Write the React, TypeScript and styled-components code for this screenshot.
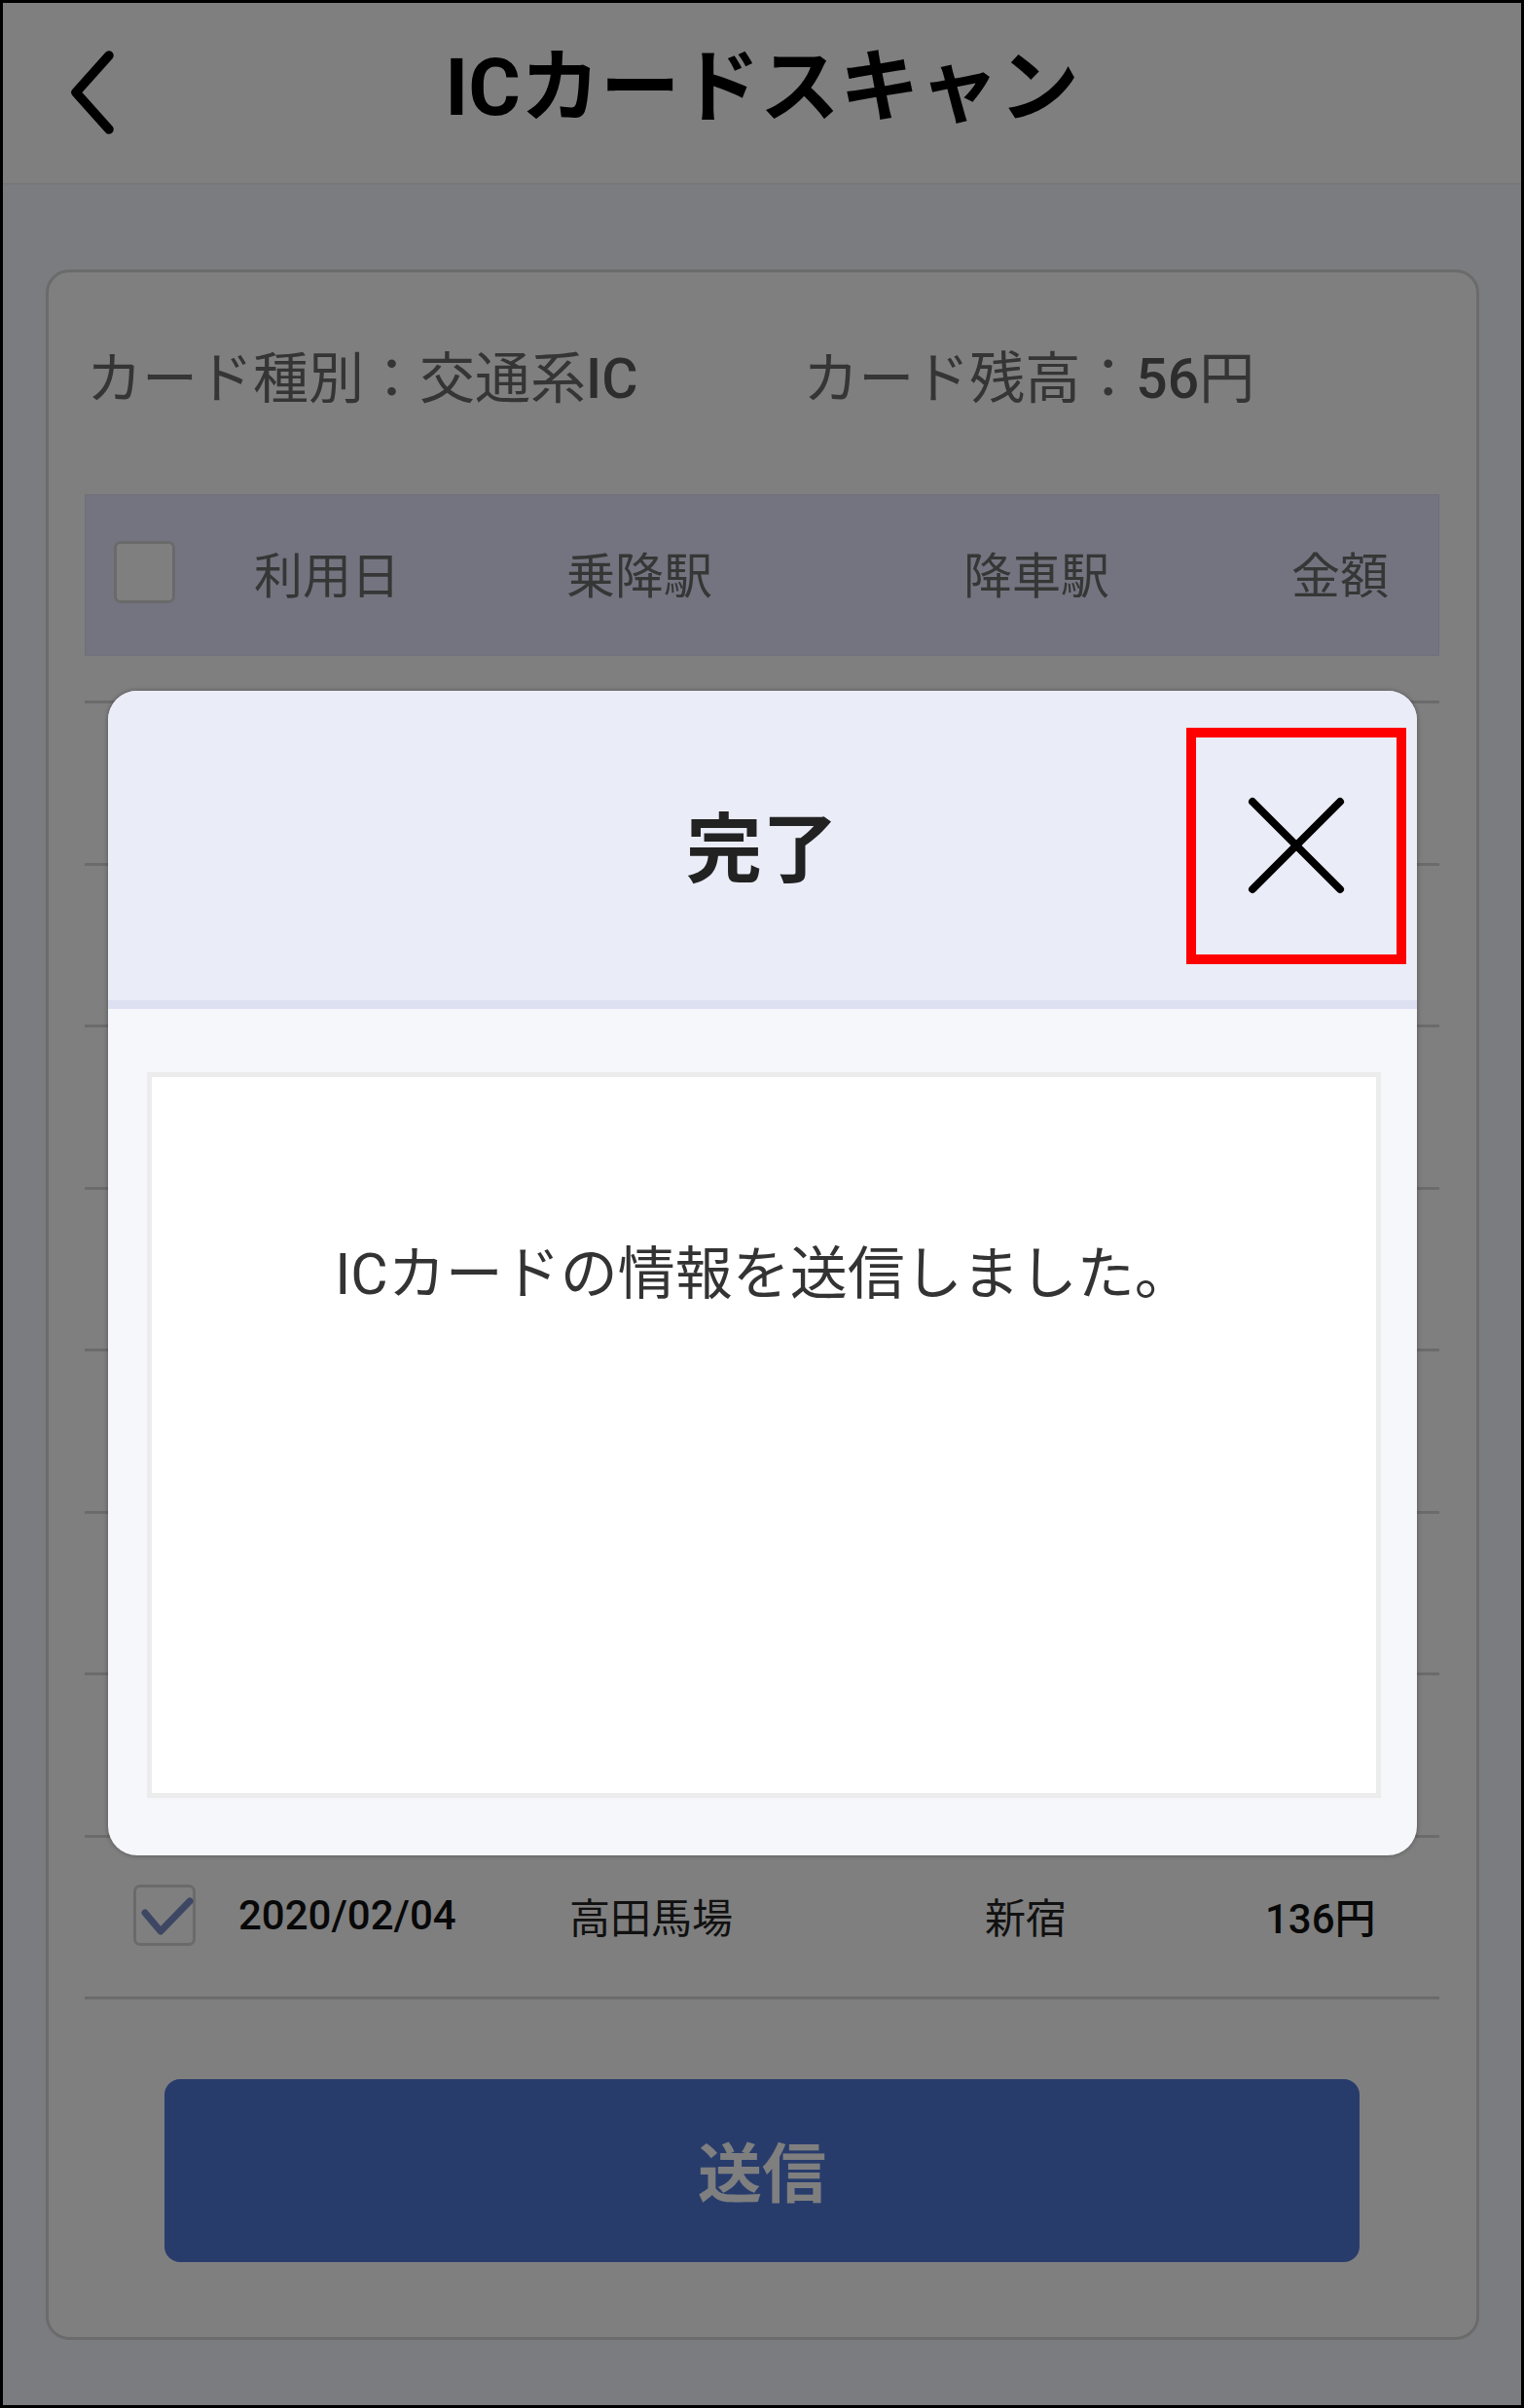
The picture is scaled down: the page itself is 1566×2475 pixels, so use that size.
import React from "react";
import styled, { createGlobalStyle } from "styled-components";

const GlobalStyle = createGlobalStyle`
  * { box-sizing: border-box; }
  html, body { margin: 0; padding: 0; background: #000; }
  body { font-family: Roboto, "Noto Sans CJK JP", sans-serif; }
`;

const FONT = `Roboto, "Noto Sans CJK JP", sans-serif`;

const Frame = styled.div`
  position: relative;
  width: 1566px;
  height: 2475px;
  border: 3px solid #000;
  background: #f6f8ff;
  overflow: hidden;
  display: flex;
  flex-direction: column;
  font-family: ${FONT};
`;

const TopBar = styled.header`
  height: 187px;
  flex-shrink: 0;
  background: #fff;
  border-bottom: 2px solid #eeeef6;
  display: grid;
  grid-template-columns: 1fr auto 1fr;
  align-items: center;
`;

const BackButton = styled.button`
  justify-self: start;
  margin-left: 64px;
  padding: 0;
  border: 0;
  background: none;
  width: 54px;
  height: 96px;
  display: flex;
`;

const PageTitle = styled.h1`
  margin: 0 0 10px;
  font-size: 82px;
  font-weight: 700;
  color: #000;
  line-height: 1.2;
  white-space: nowrap;
`;

const Main = styled.main`
  padding: 87px 43px 0 44px;
`;

const Card = styled.section`
  background: #fff;
  border: 3px solid #d6d6d6;
  border-radius: 24px;
  padding: 76px 38px 77px 37px;
`;

const InfoRow = styled.div`
  display: flex;
  gap: 170px;
  padding-left: 2px;
  font-size: 57px;
  line-height: 68px;
  color: #6a6a6a;
`;

const InfoItem = styled.span`
  white-space: nowrap;
`;

const Latin = styled.span`
  font-weight: 500;
  color: #5a5a5a;
`;

const TableGrid = styled.div<{ $cols: string; $pad: number }>`
  display: grid;
  grid-template-columns: ${(p) => p.$cols};
  align-items: center;
  padding-left: ${(p) => p.$pad}px;
`;

const TableHead = styled(TableGrid)`
  margin-top: 84px;
  height: 166px;
  padding-bottom: 6px;
  background: #e6e8ff;
  border: 1px solid #dcdef0;
  font-size: 50px;
  color: #6c6c6c;
`;

const List = styled.div`
  margin-top: 46px;
  border-top: 3px solid #d6d6d6;
`;

const Row = styled(TableGrid)`
  height: 166.5px;
  padding-bottom: 3px;
  border-bottom: 3px solid #d6d6d6;
  font-size: 42px;
  color: #222;
`;

const Cell = styled.span<{ $strong?: boolean }>`
  white-space: nowrap;
  font-weight: ${(p) => (p.$strong ? 500 : 400)};
  color: ${(p) => (p.$strong ? "#111" : "inherit")};
`;

const Check = styled.span<{ $w: number; $h: number }>`
  position: relative;
  display: block;
  width: ${(p) => p.$w}px;
  height: ${(p) => p.$h}px;
  border: 3px solid #d4d4d4;
  border-radius: 7px;
  background: #fff;
`;

const CheckMark = styled.svg`
  position: absolute;
  left: 3px;
  top: 9px;
`;

const SendButton = styled.button`
  display: flex;
  align-items: center;
  justify-content: center;
  margin: 82px auto 0;
  width: 1228px;
  height: 188px;
  padding-bottom: 6px;
  border: 0;
  border-radius: 16px;
  background: #5078d8;
  color: #fff;
  font-family: ${FONT};
  font-size: 66px;
  font-weight: 700;
`;

const Overlay = styled.div`
  position: absolute;
  inset: 0;
  background: rgba(0, 0, 0, 0.5);
  display: flex;
  justify-content: center;
  align-items: flex-start;
  padding-top: 707px;
`;

const Modal = styled.div`
  width: 1345px;
  background: #f6f7fb;
  border-radius: 30px;
  overflow: hidden;
  box-shadow: 0 0 5px rgba(0, 0, 0, 0.35);
`;

const ModalHeader = styled.div`
  height: 327px;
  background: #eaecf7;
  border-bottom: 9px solid #dde0f0;
  display: grid;
  grid-template-columns: 1fr auto 1fr;
  align-items: center;
`;

const ModalTitle = styled.h2`
  grid-column: 2;
  margin: 12px 0 0;
  font-size: 78px;
  font-weight: 700;
  color: #222;
  line-height: 1.2;
  white-space: nowrap;
`;

const CloseButton = styled.button`
  grid-column: 3;
  justify-self: end;
  margin-right: 21px;
  width: 206px;
  height: 223px;
  padding: 0;
  border: 0;
  background: none;
  outline: 10px solid #ff0000;
  display: flex;
  align-items: center;
  justify-content: center;
`;

const ModalBody = styled.div`
  padding: 65px 37px 59px 40px;
`;

const MessageBox = styled.div`
  height: 746px;
  background: #fff;
  border: 5px solid #ececec;
  padding-top: 168px;
  text-align: center;
  font-size: 59px;
  line-height: 70px;
  color: #333;
`;

const HEAD_COLS = "144px 321px 408px 337px 1fr";
const ROW_COLS = "108px 340px 427px 288px 1fr";

const rows = [
  ["2020/02/01", "新宿", "渋谷", "168円"],
  ["2020/02/01", "渋谷", "新宿", "168円"],
  ["2020/02/02", "新宿", "池袋", "168円"],
  ["2020/02/02", "池袋", "新宿", "168円"],
  ["2020/02/03", "新宿", "東京", "200円"],
  ["2020/02/03", "東京", "新宿", "200円"],
  ["2020/02/04", "新宿", "高田馬場", "136円"],
  ["2020/02/04", "高田馬場", "新宿", "136円"],
];

export default function App() {
  return (
    <>
      <GlobalStyle />
      <Frame>
        <TopBar>
          <BackButton aria-label="戻る">
            <svg width="54" height="96" viewBox="0 0 54 96">
              <polyline
                points="45,9 11,47 45,85"
                fill="none"
                stroke="#000"
                strokeWidth="9.5"
                strokeLinecap="round"
                strokeLinejoin="round"
              />
            </svg>
          </BackButton>
          <PageTitle>ICカードスキャン</PageTitle>
          <span />
        </TopBar>
        <Main>
          <Card>
            <InfoRow>
              <InfoItem>
                カード種別：交通系<Latin>IC</Latin>
              </InfoItem>
              <InfoItem>
                カード残高：<Latin>56</Latin>円
              </InfoItem>
            </InfoRow>
            <TableHead $cols={HEAD_COLS} $pad={29}>
              <Check $w={63} $h={64} />
              <Cell>利用日</Cell>
              <Cell>乗降駅</Cell>
              <Cell>降車駅</Cell>
              <Cell>金額</Cell>
            </TableHead>
            <List>
              {rows.map((r, i) => (
                <Row key={i} $cols={ROW_COLS} $pad={50}>
                  <Check $w={64} $h={63}>
                    <CheckMark width="56" height="40" viewBox="0 0 56 40">
                      <polyline
                        points="6,17 22,36 52,5"
                        fill="none"
                        stroke="#7a8ec8"
                        strokeWidth="7"
                        strokeLinecap="round"
                        strokeLinejoin="round"
                      />
                    </CheckMark>
                  </Check>
                  <Cell $strong>{r[0]}</Cell>
                  <Cell>{r[1]}</Cell>
                  <Cell>{r[2]}</Cell>
                  <Cell $strong>{r[3]}</Cell>
                </Row>
              ))}
            </List>
            <SendButton>送信</SendButton>
          </Card>
        </Main>
        <Overlay>
          <Modal role="dialog">
            <ModalHeader>
              <ModalTitle>完了</ModalTitle>
              <CloseButton aria-label="閉じる">
                <svg width="100" height="100" viewBox="0 0 100 100">
                  <line x1="5" y1="5" x2="95" y2="95" stroke="#000" strokeWidth="8" strokeLinecap="round" />
                  <line x1="95" y1="5" x2="5" y2="95" stroke="#000" strokeWidth="8" strokeLinecap="round" />
                </svg>
              </CloseButton>
            </ModalHeader>
            <ModalBody>
              <MessageBox>ICカードの情報を送信しました。</MessageBox>
            </ModalBody>
          </Modal>
        </Overlay>
      </Frame>
    </>
  );
}
